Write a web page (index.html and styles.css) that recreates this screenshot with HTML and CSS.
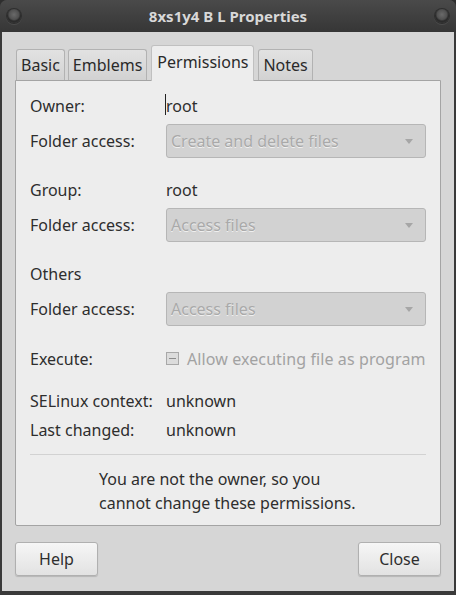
FILE: index.html
```html
<!DOCTYPE html>
<html>
<head>
<meta charset="utf-8">
<link rel="stylesheet" href="styles.css">
</head>
<body>
<div class="window">
  <div class="titlebar">
    <span class="tbtn"></span>
    <span class="title">8xs1y4 B L Properties</span>
    <span class="tbtn"></span>
  </div>
  <div class="client">
    <div class="tabs">
      <div class="tab">Basic</div>
      <div class="tab">Emblems</div>
      <div class="tab active">Permissions</div>
      <div class="tab">Notes</div>
    </div>
    <div class="panel">
      <div class="row r-owner"><span class="lbl">Owner:</span><span class="val"><span class="caret"></span>root</span></div>
      <div class="row r-combo"><span class="lbl">Folder access:</span><div class="combo"><span>Create and delete files</span><span class="arrow"></span></div></div>
      <div class="row r-head"><span class="lbl">Group:</span><span class="val">root</span></div>
      <div class="row r-combo"><span class="lbl">Folder access:</span><div class="combo"><span>Access files</span><span class="arrow"></span></div></div>
      <div class="row r-head"><span class="lbl">Others</span></div>
      <div class="row r-combo"><span class="lbl">Folder access:</span><div class="combo"><span>Access files</span><span class="arrow"></span></div></div>
      <div class="row r-exec"><span class="lbl">Execute:</span><span class="check"><span class="box"></span>Allow executing file as program</span></div>
      <div class="row r-se"><span class="lbl">SELinux context:</span><span class="val">unknown</span></div>
      <div class="row r-lc"><span class="lbl">Last changed:</span><span class="val">unknown</span></div>
      <div class="sep"></div>
      <div class="msg">You are not the owner, so you<br>cannot change these permissions.</div>
    </div>
    <div class="buttons">
      <div class="btn">Help</div>
      <div class="btn">Close</div>
    </div>
  </div>
</div>
</body>
</html>
```
FILE: styles.css
```css
html, body { margin: 0; padding: 0; }
body { width: 456px; height: 595px; background: #2e2e2e; font-family: "Noto Sans", "Open Sans", sans-serif; font-size: 16px; color: #2e2e2e; overflow: hidden; }
.window { width: 456px; height: 595px; box-sizing: border-box; background: #3a3a3a; border-radius: 7px 7px 0 0; display: flex; flex-direction: column; padding: 0 2px 4px 2px; }
.titlebar { height: 32px; flex: none; display: flex; align-items: center; justify-content: space-between; padding: 0 5px 0 5px; background: linear-gradient(#4a4a4a, #363636); margin: 0 -2px; border-radius: 7px 7px 0 0; }
.tbtn { width: 14px; height: 14px; border-radius: 50%; background: radial-gradient(circle at 50% 40%, #6a6a6a 0, #505050 45%, #2a2a2a 60%, #3c3c3c 100%); box-shadow: 0 0 0 1px #2e2e2e, 0 1px 0 1px #4c4c4c; margin: 0 2px; }
.title { color: #d8d8d8; font-weight: bold; font-size: 15px; }
.client { flex: 1; background: #d6d6d6; display: flex; flex-direction: column; padding: 13px 13px 0 13px; }
.tabs { display: flex; align-items: flex-end; height: 35px; padding-left: 1px; gap: 3px; }
.tab { height: 31px; box-sizing: border-box; padding: 0 4px; border: 1px solid #b2b2b2; border-bottom: none; border-radius: 3px 3px 0 0; background: linear-gradient(#e2e2e2, #d2d2d2); line-height: 30px; font-size: 16px; color: #2a2a2a; }
.tab.active { background: #ededed; line-height: 32px; margin: 0 1px -1px 1px; height: 36px; position: relative; z-index: 1; border-color: #c0c0c0; padding: 0 5px; }
.panel { height: 446px; box-sizing: border-box; background: #ededed; border: 1px solid #a4a4a4; border-radius: 0 0 2px 2px; padding: 11px 14px 0 14px; display: flex; flex-direction: column; }
.row { display: flex; align-items: center; }
.lbl { width: 136px; flex: none; }
.val { position: relative; }
.caret { position: absolute; left: -1px; top: -1px; width: 1px; height: 21px; background: #222; }
.r-owner { height: 28px; }
.r-combo { height: 34px; margin-top: 4px; }
.r-head { height: 28px; margin-top: 18px; }
.combo { width: 261px; height: 34px; box-sizing: border-box; border: 1px solid #b6b6b6; border-radius: 3px; background: #d2d2d2; display: flex; align-items: center; justify-content: space-between; padding: 0 12px 0 4px; color: #a9a9a9; text-shadow: 0 1px 0 #f0f0f0; font-size: 16px; }
.arrow { width: 0; height: 0; border-left: 4px solid transparent; border-right: 4px solid transparent; border-top: 5px solid #a6a6a6; }
.r-exec { height: 28px; margin-top: 19px; }
.check { display: flex; align-items: center; color: #a2a2a2; font-size: 16px; letter-spacing: 0.1px; }
.box { width: 13px; height: 13px; box-sizing: border-box; border: 1px solid #a8a8a8; background: #dcdcdc; margin: 0 8px 2px 0; position: relative; }
.box::after { content: ""; position: absolute; left: 2px; right: 2px; top: 5px; height: 1px; background: #8c8c8c; }
.r-se { height: 28px; margin-top: 14px; }
.r-lc { height: 28px; margin-top: 1px; }
.sep { height: 1px; background: #d2d2d2; margin: 10px 0 0 0; }
.msg { margin-top: 12px; padding-left: 69px; line-height: 24px; }
.buttons { display: flex; justify-content: space-between; margin-top: 16px; }
.btn { width: 83px; height: 34px; box-sizing: border-box; border: 1px solid #b0b0b0; border-radius: 3px; background: linear-gradient(#f6f6f6, #e2e2e2); box-shadow: 0 1px 1px rgba(0,0,0,0.15); display: flex; align-items: center; justify-content: center; font-size: 16px; color: #2e2e2e; }
```
